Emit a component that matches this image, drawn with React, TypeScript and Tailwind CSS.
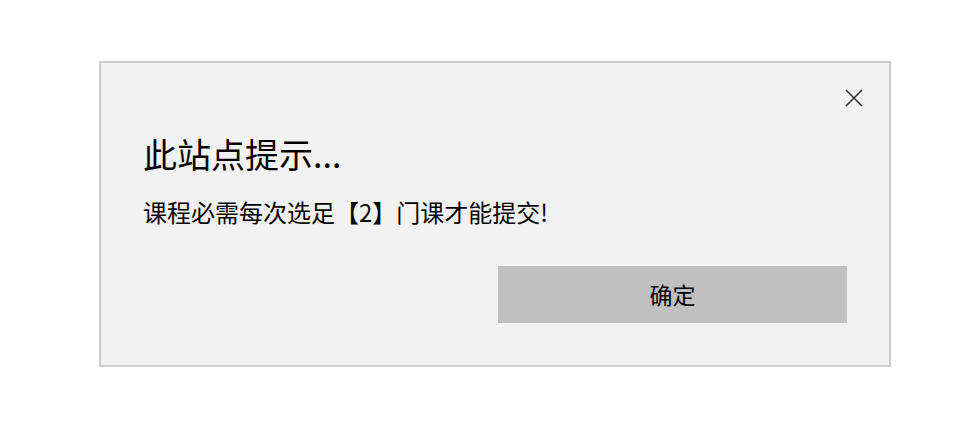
export default function App() {
  return (
    <div
      className="min-h-screen w-full bg-white pl-[99px] pt-[61px]"
      style={{ fontFamily: '"Noto Sans CJK SC", "Noto Sans", sans-serif' }}
    >
      <div className="flex h-[306px] w-[792px] flex-col border-2 border-[#cccccc] bg-[#f2f2f2] text-black">
        <div className="flex justify-end pr-[26px] pt-[26px]">
          <button aria-label="关闭" className="flex h-[18px] w-[18px] items-center justify-center">
            <svg width="18" height="18" viewBox="0 0 18 18" fill="none">
              <path d="M1 1L17 17M17 1L1 17" stroke="#333333" strokeWidth="1.6" />
            </svg>
          </button>
        </div>
        <div className="pl-[42px] pt-[25px]">
          <h1 className="text-[34px] leading-[44px] font-normal">此站点提示...</h1>
          <p className="mt-[19px] text-[24px] leading-[34px]">课程必需每次选足【2】门课才能提交!</p>
        </div>
        <div className="flex justify-end pr-[42px] pt-[37px]">
          <button className="h-[57px] w-[349px] bg-[#c0c0c0] text-[23px] leading-none text-black">
            确定
          </button>
        </div>
      </div>
    </div>
  )
}
